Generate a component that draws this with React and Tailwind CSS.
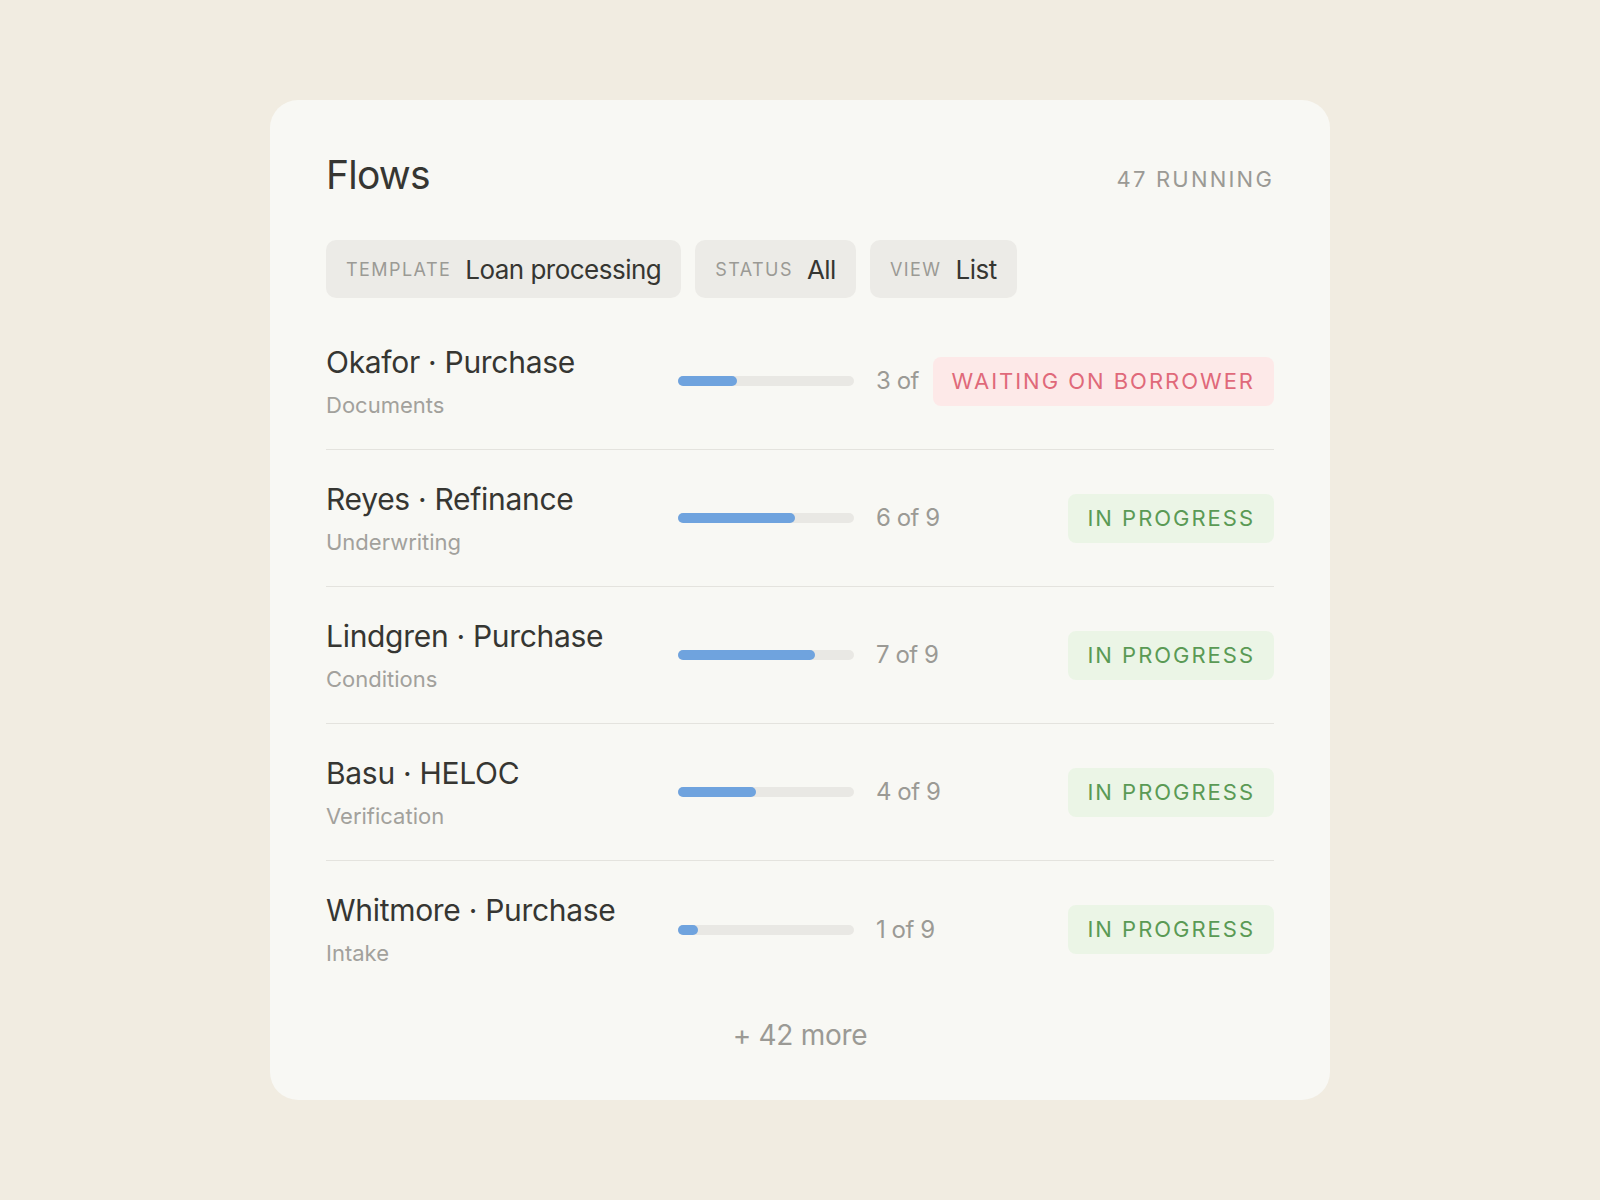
const rows = [
  { name: "Okafor · Purchase", stage: "Documents", step: 3, status: "WAITING ON BORROWER", warn: true },
  { name: "Reyes · Refinance", stage: "Underwriting", step: 6 },
  { name: "Lindgren · Purchase", stage: "Conditions", step: 7 },
  { name: "Basu · HELOC", stage: "Verification", step: 4 },
  { name: "Whitmore · Purchase", stage: "Intake", step: 1 },
];

const filters = [
  { label: "TEMPLATE", value: "Loan processing" },
  { label: "STATUS", value: "All" },
  { label: "VIEW", value: "List" },
];

export default function App() {
  return (
    <div
      className="min-h-[1200px] bg-[#f1ece1] pt-[100px] pl-[270px]"
      style={{ fontFamily: "Inter, 'Noto Sans', sans-serif" }}
    >
      <div className="w-[1060px] h-[1000px] rounded-[28px] bg-[#f8f8f4] px-[56px] pt-[51px]">
        <div className="flex items-center justify-between h-[48px]">
          <h1 className="text-[39px] text-[#363632] tracking-[-0.02em]">Flows</h1>
          <span className="text-[22px] tracking-[0.1em] text-[#9b9a95] mt-2">47 RUNNING</span>
        </div>

        <div className="flex gap-[14px] mt-[41px]">
          {filters.map((f) => (
            <div
              key={f.label}
              className="h-[58px] rounded-[10px] bg-[#ecebe7] px-5 flex items-center gap-[14px]"
            >
              <span className="text-[18px] tracking-[0.08em] text-[#9b9a95]">{f.label}</span>
              <span className="text-[26px] tracking-[-0.02em] text-[#363632]">{f.value}</span>
            </div>
          ))}
        </div>

        <div className="mt-[15px]">
          {rows.map((r, i) => (
            <div
              key={r.name}
              className={`h-[137px] flex items-center ${
                i < rows.length - 1 ? "border-b border-[#e4e3de]" : ""
              }`}
            >
              <div className="w-[352px] shrink-0">
                <div className="text-[30px] tracking-[-0.01em] text-[#363632] leading-[38px]">{r.name}</div>
                <div className="text-[22px] text-[#a2a19c] leading-[30px] mt-[9px]">{r.stage}</div>
              </div>
              <div className="w-[176px] h-[10px] rounded-full bg-[#e9e8e4] shrink-0">
                <div
                  className="h-full rounded-full bg-[#6fa3de]"
                  style={{ width: `${Math.max((r.step / 9) * 100, 11)}%` }}
                />
              </div>
              <div className="flex-1 min-w-0 overflow-hidden whitespace-nowrap ml-[22px] text-[24px] tracking-[-0.02em] text-[#9b9a95]">
                {r.step} of 9
              </div>
              <div
                className={`shrink-0 ml-2 h-[49px] rounded-[8px] px-[19px] flex items-center text-[22px] tracking-[0.09em] ${
                  r.warn ? "bg-[#fde9e8] text-[#e0697a]" : "bg-[#ebf5e6] text-[#5a9a55]"
                }`}
              >
                {r.status || "IN PROGRESS"}
              </div>
            </div>
          ))}
        </div>

        <div className="mt-[19px] text-center text-[28px] leading-[36px] tracking-[-0.01em] text-[#9b9a95]">+ 42 more</div>
      </div>
    </div>
  );
}
